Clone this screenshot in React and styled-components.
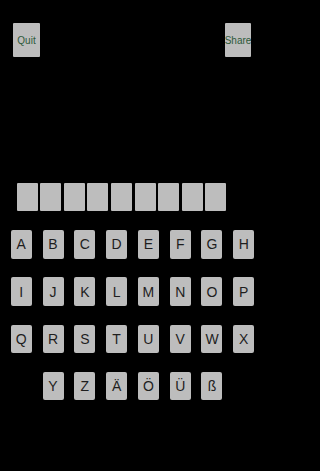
import React from 'react';
import styled, { createGlobalStyle } from 'styled-components';

const GlobalStyle = createGlobalStyle`
  html, body {
    margin: 0;
    padding: 0;
    background: #000;
  }
  body {
    font-family: "Liberation Sans", Arial, sans-serif;
  }
`;

const Screen = styled.div`
  width: 265px;
  height: 471px;
  background: #000;
  display: flex;
  flex-direction: column;
  overflow: hidden;
`;

const TopBar = styled.div`
  display: flex;
  justify-content: space-between;
  padding: 23px 14px 0 13px;
`;

const TopButton = styled.button`
  width: ${p => p.w}px;
  height: 34px;
  padding: 0;
  border: none;
  border-radius: 1px;
  background: #bdbdbd;
  color: #2d5a3a;
  font-family: "Liberation Sans", Arial, sans-serif;
  font-size: 10px;
  display: flex;
  align-items: center;
  justify-content: center;
  white-space: nowrap;
`;

const Blanks = styled.div`
  display: flex;
  gap: 2.6px;
  padding-left: 16.7px;
  margin-top: 126px;
`;

const Blank = styled.div`
  width: 21px;
  height: 28px;
  background: #bdbdbd;
  border-radius: 1px;
`;

const Keyboard = styled.div`
  display: flex;
  flex-direction: column;
  gap: 18.8px;
  margin-top: 19px;
`;

const Row = styled.div`
  display: flex;
  justify-content: center;
  gap: 10.8px;
`;

const Key = styled.div`
  width: 21px;
  height: 28.5px;
  background: #bdbdbd;
  border-radius: 2px;
  color: #1e1e1e;
  font-size: 14px;
  display: flex;
  align-items: center;
  justify-content: center;
`;

const rows = [
  ['A', 'B', 'C', 'D', 'E', 'F', 'G', 'H'],
  ['I', 'J', 'K', 'L', 'M', 'N', 'O', 'P'],
  ['Q', 'R', 'S', 'T', 'U', 'V', 'W', 'X'],
  ['Y', 'Z', 'Ä', 'Ö', 'Ü', 'ß'],
];

export default function App() {
  return (
    <Screen>
      <GlobalStyle />
      <TopBar>
        <TopButton w={27}>Quit</TopButton>
        <TopButton w={26}>Share</TopButton>
      </TopBar>
      <Blanks>
        {Array.from({ length: 9 }).map((_, i) => (
          <Blank key={i} />
        ))}
      </Blanks>
      <Keyboard>
        {rows.map((row, i) => (
          <Row key={i}>
            {row.map(l => (
              <Key key={l}>{l}</Key>
            ))}
          </Row>
        ))}
      </Keyboard>
    </Screen>
  );
}
